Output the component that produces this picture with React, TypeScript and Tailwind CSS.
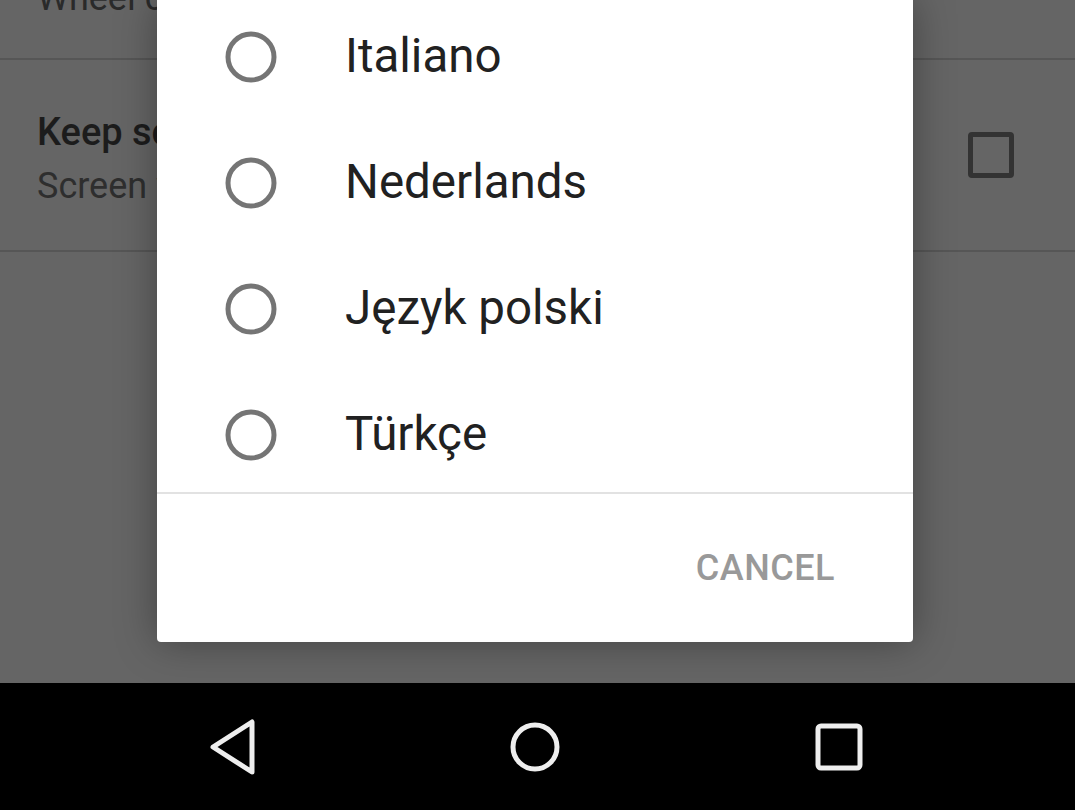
import React from "react";

const languages = ["Italiano", "Nederlands", "Język polski", "Türkçe"];

function Radio() {
  return (
    <svg width="52" height="52" viewBox="0 0 52 52" className="shrink-0">
      <circle cx="26" cy="26" r="23" fill="none" stroke="#757575" strokeWidth="5" />
    </svg>
  );
}

export default function App() {
  return (
    <div className="w-[1075px] h-[810px] flex flex-col overflow-hidden font-['Roboto',sans-serif]">
      <div className="relative h-[683px] bg-[#656565]">
        {/* settings list underneath (dimmed) */}
        <div className="h-[60px] border-b-2 border-[#565656] overflow-hidden pl-[37px]">
          <div className="-mt-[20px] text-[36px] leading-none text-[#2a2a2a]">Wheel control</div>
        </div>
        <div className="h-[192px] border-b-2 border-[#565656] flex items-center justify-between pl-[37px] pr-[61px]">
          <div className="flex flex-col pt-[6px]">
            <div className="text-[38px] leading-none font-medium text-[#1c1c1c]">Keep screen on</div>
            <div className="mt-[17px] text-[36px] leading-none text-[#2e2e2e]">Screen will stay on</div>
          </div>
          <div className="w-[46px] h-[46px] border-[5px] border-[#333333] rounded-[4px]" />
        </div>

        {/* dialog */}
        <div className="absolute left-[157px] top-0 w-[756px] h-[642px] bg-white rounded-b-[4px] shadow-[0_0_40px_rgba(0,0,0,0.35)] flex flex-col">
          <div className="h-[492px] overflow-hidden">
            <div className="-mt-[6px]">
              {languages.map((l) => (
                <div key={l} className="h-[126px] flex items-center pl-[68px]">
                  <Radio />
                  <span className="ml-[68px] text-[47.5px] leading-none text-[#212121]">{l}</span>
                </div>
              ))}
            </div>
          </div>
          <div className="h-[2px] bg-[#e2e2e2]" />
          <div className="flex-1 flex items-center justify-end pr-[78px]">
            <span className="text-[36px] leading-none font-medium text-[#999999] tracking-[0.5px]">CANCEL</span>
          </div>
        </div>
      </div>

      {/* nav bar */}
      <div className="h-[127px] bg-black flex items-center pl-[79px]">
        <div className="w-[304px] flex justify-center">
          <svg width="50" height="56" viewBox="0 0 50 56" className="ml-[6px]">
            <path d="M43 3 L43 53 L4 28 Z" fill="none" stroke="#eeeeee" strokeWidth="5" strokeLinejoin="round" />
          </svg>
        </div>
        <div className="w-[304px] flex justify-center">
          <svg width="52" height="52" viewBox="0 0 52 52">
            <circle cx="26" cy="26" r="22" fill="none" stroke="#eeeeee" strokeWidth="5" />
          </svg>
        </div>
        <div className="w-[304px] flex justify-center">
          <svg width="48" height="48" viewBox="0 0 48 48">
            <rect x="3" y="3" width="42" height="42" rx="3" fill="none" stroke="#eeeeee" strokeWidth="5" />
          </svg>
        </div>
      </div>
    </div>
  );
}
